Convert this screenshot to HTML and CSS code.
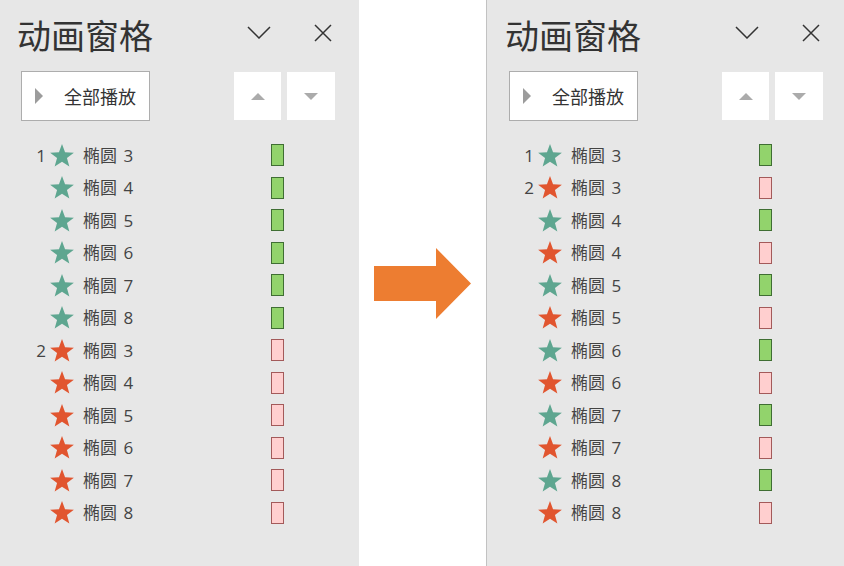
FILE: index.html
```html
<!DOCTYPE html>
<html lang="zh">
<head>
<meta charset="utf-8">
<title>动画窗格</title>
<link rel="stylesheet" href="styles.css">
</head>
<body>
<div class="page">
  <section class="panel">
    <header class="head">
      <h1 class="title">动画窗格</h1>
      <span class="icon-btn chev"><svg width="24" height="13" viewBox="0 0 24 13"><polyline points="1,1 12,12 23,1" fill="none" stroke="#333" stroke-width="1.5"/></svg></span>
      <span class="icon-btn close"><svg width="18" height="18" viewBox="0 0 18 18"><path d="M1 1L17 17M17 1L1 17" stroke="#333" stroke-width="1.5"/></svg></span>
    </header>
    <div class="tools">
      <button class="play"><span class="tri"></span><span class="play-text">全部播放</span></button>
      <span class="mv up"><span class="up-tri"></span></span>
      <span class="mv down"><span class="down-tri"></span></span>
    </div>
    <ul class="list">
      <li class="row"><span class="num">1</span><svg class="star g" viewBox="0 0 24 23"><polygon points="12,0 15.06,8.29 23.89,8.64 16.95,14.11 19.35,22.61 12,17.7 4.65,22.61 7.05,14.11 0.11,8.64 8.94,8.29"/></svg><span class="name">椭圆 3</span><span class="bar green"></span></li>
      <li class="row"><span class="num"></span><svg class="star g" viewBox="0 0 24 23"><polygon points="12,0 15.06,8.29 23.89,8.64 16.95,14.11 19.35,22.61 12,17.7 4.65,22.61 7.05,14.11 0.11,8.64 8.94,8.29"/></svg><span class="name">椭圆 4</span><span class="bar green"></span></li>
      <li class="row"><span class="num"></span><svg class="star g" viewBox="0 0 24 23"><polygon points="12,0 15.06,8.29 23.89,8.64 16.95,14.11 19.35,22.61 12,17.7 4.65,22.61 7.05,14.11 0.11,8.64 8.94,8.29"/></svg><span class="name">椭圆 5</span><span class="bar green"></span></li>
      <li class="row"><span class="num"></span><svg class="star g" viewBox="0 0 24 23"><polygon points="12,0 15.06,8.29 23.89,8.64 16.95,14.11 19.35,22.61 12,17.7 4.65,22.61 7.05,14.11 0.11,8.64 8.94,8.29"/></svg><span class="name">椭圆 6</span><span class="bar green"></span></li>
      <li class="row"><span class="num"></span><svg class="star g" viewBox="0 0 24 23"><polygon points="12,0 15.06,8.29 23.89,8.64 16.95,14.11 19.35,22.61 12,17.7 4.65,22.61 7.05,14.11 0.11,8.64 8.94,8.29"/></svg><span class="name">椭圆 7</span><span class="bar green"></span></li>
      <li class="row"><span class="num"></span><svg class="star g" viewBox="0 0 24 23"><polygon points="12,0 15.06,8.29 23.89,8.64 16.95,14.11 19.35,22.61 12,17.7 4.65,22.61 7.05,14.11 0.11,8.64 8.94,8.29"/></svg><span class="name">椭圆 8</span><span class="bar green"></span></li>
      <li class="row"><span class="num">2</span><svg class="star r" viewBox="0 0 24 23"><polygon points="12,0 15.06,8.29 23.89,8.64 16.95,14.11 19.35,22.61 12,17.7 4.65,22.61 7.05,14.11 0.11,8.64 8.94,8.29"/></svg><span class="name">椭圆 3</span><span class="bar pink"></span></li>
      <li class="row"><span class="num"></span><svg class="star r" viewBox="0 0 24 23"><polygon points="12,0 15.06,8.29 23.89,8.64 16.95,14.11 19.35,22.61 12,17.7 4.65,22.61 7.05,14.11 0.11,8.64 8.94,8.29"/></svg><span class="name">椭圆 4</span><span class="bar pink"></span></li>
      <li class="row"><span class="num"></span><svg class="star r" viewBox="0 0 24 23"><polygon points="12,0 15.06,8.29 23.89,8.64 16.95,14.11 19.35,22.61 12,17.7 4.65,22.61 7.05,14.11 0.11,8.64 8.94,8.29"/></svg><span class="name">椭圆 5</span><span class="bar pink"></span></li>
      <li class="row"><span class="num"></span><svg class="star r" viewBox="0 0 24 23"><polygon points="12,0 15.06,8.29 23.89,8.64 16.95,14.11 19.35,22.61 12,17.7 4.65,22.61 7.05,14.11 0.11,8.64 8.94,8.29"/></svg><span class="name">椭圆 6</span><span class="bar pink"></span></li>
      <li class="row"><span class="num"></span><svg class="star r" viewBox="0 0 24 23"><polygon points="12,0 15.06,8.29 23.89,8.64 16.95,14.11 19.35,22.61 12,17.7 4.65,22.61 7.05,14.11 0.11,8.64 8.94,8.29"/></svg><span class="name">椭圆 7</span><span class="bar pink"></span></li>
      <li class="row"><span class="num"></span><svg class="star r" viewBox="0 0 24 23"><polygon points="12,0 15.06,8.29 23.89,8.64 16.95,14.11 19.35,22.61 12,17.7 4.65,22.61 7.05,14.11 0.11,8.64 8.94,8.29"/></svg><span class="name">椭圆 8</span><span class="bar pink"></span></li>
    </ul>
  </section>

  <div class="middle">
    <svg class="arrow" width="97" height="71" viewBox="0 0 97 71"><polygon points="0,18 62,18 62,0 97,35.5 62,71 62,53 0,53" fill="#ed7d31"/></svg>
  </div>

  <section class="panel right">
    <header class="head">
      <h1 class="title">动画窗格</h1>
      <span class="icon-btn chev"><svg width="24" height="13" viewBox="0 0 24 13"><polyline points="1,1 12,12 23,1" fill="none" stroke="#333" stroke-width="1.5"/></svg></span>
      <span class="icon-btn close"><svg width="18" height="18" viewBox="0 0 18 18"><path d="M1 1L17 17M17 1L1 17" stroke="#333" stroke-width="1.5"/></svg></span>
    </header>
    <div class="tools">
      <button class="play"><span class="tri"></span><span class="play-text">全部播放</span></button>
      <span class="mv up"><span class="up-tri"></span></span>
      <span class="mv down"><span class="down-tri"></span></span>
    </div>
    <ul class="list">
      <li class="row"><span class="num">1</span><svg class="star g" viewBox="0 0 24 23"><polygon points="12,0 15.06,8.29 23.89,8.64 16.95,14.11 19.35,22.61 12,17.7 4.65,22.61 7.05,14.11 0.11,8.64 8.94,8.29"/></svg><span class="name">椭圆 3</span><span class="bar green"></span></li>
      <li class="row"><span class="num">2</span><svg class="star r" viewBox="0 0 24 23"><polygon points="12,0 15.06,8.29 23.89,8.64 16.95,14.11 19.35,22.61 12,17.7 4.65,22.61 7.05,14.11 0.11,8.64 8.94,8.29"/></svg><span class="name">椭圆 3</span><span class="bar pink"></span></li>
      <li class="row"><span class="num"></span><svg class="star g" viewBox="0 0 24 23"><polygon points="12,0 15.06,8.29 23.89,8.64 16.95,14.11 19.35,22.61 12,17.7 4.65,22.61 7.05,14.11 0.11,8.64 8.94,8.29"/></svg><span class="name">椭圆 4</span><span class="bar green"></span></li>
      <li class="row"><span class="num"></span><svg class="star r" viewBox="0 0 24 23"><polygon points="12,0 15.06,8.29 23.89,8.64 16.95,14.11 19.35,22.61 12,17.7 4.65,22.61 7.05,14.11 0.11,8.64 8.94,8.29"/></svg><span class="name">椭圆 4</span><span class="bar pink"></span></li>
      <li class="row"><span class="num"></span><svg class="star g" viewBox="0 0 24 23"><polygon points="12,0 15.06,8.29 23.89,8.64 16.95,14.11 19.35,22.61 12,17.7 4.65,22.61 7.05,14.11 0.11,8.64 8.94,8.29"/></svg><span class="name">椭圆 5</span><span class="bar green"></span></li>
      <li class="row"><span class="num"></span><svg class="star r" viewBox="0 0 24 23"><polygon points="12,0 15.06,8.29 23.89,8.64 16.95,14.11 19.35,22.61 12,17.7 4.65,22.61 7.05,14.11 0.11,8.64 8.94,8.29"/></svg><span class="name">椭圆 5</span><span class="bar pink"></span></li>
      <li class="row"><span class="num"></span><svg class="star g" viewBox="0 0 24 23"><polygon points="12,0 15.06,8.29 23.89,8.64 16.95,14.11 19.35,22.61 12,17.7 4.65,22.61 7.05,14.11 0.11,8.64 8.94,8.29"/></svg><span class="name">椭圆 6</span><span class="bar green"></span></li>
      <li class="row"><span class="num"></span><svg class="star r" viewBox="0 0 24 23"><polygon points="12,0 15.06,8.29 23.89,8.64 16.95,14.11 19.35,22.61 12,17.7 4.65,22.61 7.05,14.11 0.11,8.64 8.94,8.29"/></svg><span class="name">椭圆 6</span><span class="bar pink"></span></li>
      <li class="row"><span class="num"></span><svg class="star g" viewBox="0 0 24 23"><polygon points="12,0 15.06,8.29 23.89,8.64 16.95,14.11 19.35,22.61 12,17.7 4.65,22.61 7.05,14.11 0.11,8.64 8.94,8.29"/></svg><span class="name">椭圆 7</span><span class="bar green"></span></li>
      <li class="row"><span class="num"></span><svg class="star r" viewBox="0 0 24 23"><polygon points="12,0 15.06,8.29 23.89,8.64 16.95,14.11 19.35,22.61 12,17.7 4.65,22.61 7.05,14.11 0.11,8.64 8.94,8.29"/></svg><span class="name">椭圆 7</span><span class="bar pink"></span></li>
      <li class="row"><span class="num"></span><svg class="star g" viewBox="0 0 24 23"><polygon points="12,0 15.06,8.29 23.89,8.64 16.95,14.11 19.35,22.61 12,17.7 4.65,22.61 7.05,14.11 0.11,8.64 8.94,8.29"/></svg><span class="name">椭圆 8</span><span class="bar green"></span></li>
      <li class="row"><span class="num"></span><svg class="star r" viewBox="0 0 24 23"><polygon points="12,0 15.06,8.29 23.89,8.64 16.95,14.11 19.35,22.61 12,17.7 4.65,22.61 7.05,14.11 0.11,8.64 8.94,8.29"/></svg><span class="name">椭圆 8</span><span class="bar pink"></span></li>
    </ul>
  </section>
</div>
</body>
</html>
```

FILE: styles.css
```css
* { box-sizing: border-box; }
html, body { margin: 0; padding: 0; background: #fff; }
body { font-family: "Noto Sans CJK SC", "Noto Sans", sans-serif; color: #3a3a3a; }

.page {
  display: flex;
  width: 844px;
  height: 566px;
}

.panel {
  width: 359px;
  flex: 0 0 359px;
  height: 100%;
  background: #e7e7e7;
  display: flex;
  flex-direction: column;
}
.panel.right {
  flex: 1 1 auto;
  width: auto;
  border-left: 1px solid #c2c2c2;
  padding-left: 1px;
}

.middle {
  flex: 0 0 127px;
  display: flex;
  align-items: center;
  justify-content: center;
  background: #fff;
}
.arrow { display: block; }

.head {
  height: 71px;
  display: flex;
  align-items: center;
  padding-left: 17px;
}
.title {
  margin: 0;
  font-size: 34px;
  line-height: 1;
  font-weight: 400;
  color: #333;
  flex: 0 0 auto;
  position: relative;
  top: -1px;
}
.icon-btn {
  width: 40px;
  height: 40px;
  display: flex;
  align-items: center;
  justify-content: center;
}
.icon-btn svg { display: block; }
.chev { margin-left: 86px; }
.close { margin-left: 24px; }
.chev svg { position: relative; top: -3px; }
.close svg { position: relative; top: -3px; }

.tools {
  display: flex;
  align-items: center;
  height: 50px;
  padding-left: 21px;
}
.play {
  width: 129px;
  height: 50px;
  background: #fff;
  border: 1px solid #adadad;
  padding: 0 0 0 13px;
  margin: 0;
  display: flex;
  align-items: center;
  font-family: inherit;
  cursor: default;
}
.tri {
  width: 0;
  height: 0;
  border-top: 8px solid transparent;
  border-bottom: 8px solid transparent;
  border-left: 8px solid #9c9c9c;
}
.play-text {
  margin-left: 21px;
  font-size: 18px;
  line-height: 1;
  color: #333;
}
.mv {
  width: 47px;
  height: 48px;
  background: #fff;
  display: flex;
  align-items: center;
  justify-content: center;
}
.up { margin-left: 84px; }
.down { margin-left: 6px; width: 48px; }
.up-tri {
  width: 0; height: 0;
  border-left: 7px solid transparent;
  border-right: 7px solid transparent;
  border-bottom: 7px solid #ababab;
}
.down-tri {
  width: 0; height: 0;
  border-left: 7px solid transparent;
  border-right: 7px solid transparent;
  border-top: 7px solid #ababab;
  margin-top: 1px;
}

.list {
  list-style: none;
  margin: 18px 0 0;
  padding: 0;
}
.row {
  height: 32.5px;
  display: grid;
  grid-template-columns: 47px 30px 194px 13px;
  align-items: center;
}
.num {
  text-align: right;
  font-family: "Open Sans", "Noto Sans CJK SC", sans-serif;
  font-size: 17px;
  line-height: 1;
  color: #444;
  padding-right: 1px;
}
.star {
  width: 24px;
  height: 23px;
  margin-left: 3px;
  display: block;
}
.star.g { fill: #5ea690; }
.star.r { fill: #e1552f; }
.name {
  padding-left: 6px;
  font-family: "Open Sans", "Noto Sans CJK SC", sans-serif;
  font-size: 17px;
  line-height: 1;
  color: #444;
  white-space: pre;
  word-spacing: 2px;
}
.bar {
  width: 13px;
  height: 22px;
  display: block;
  border: 1px solid;
}
.bar.green { background: #92d36c; border-color: #3f6e33; }
.bar.pink { background: #ffcfcf; border-color: #a35a5a; }
```
